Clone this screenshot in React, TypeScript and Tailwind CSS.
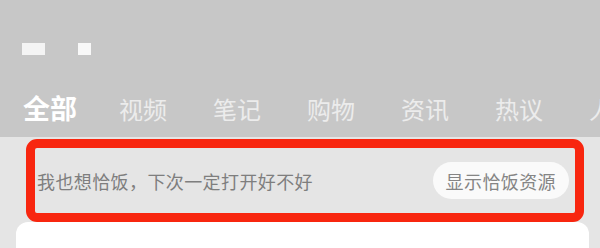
import React from "react";

export default function App() {
  const tabs = ["视频", "笔记", "购物", "资讯", "热议", "人文"];
  return (
    <div
      className="w-[600px] h-[248px] overflow-hidden bg-[#e5e5e5]"
      style={{ fontFamily: '"Noto Sans CJK SC", "Noto Sans", sans-serif' }}
    >
      <div className="h-[137px] bg-[#c7c7c7] overflow-hidden">
        <div className="flex pt-[43px] pl-[22px] gap-[33px]">
          <div className="w-[23px] h-[12px] bg-[#f4f4f4]" />
          <div className="w-[13px] h-[12px] bg-[#f8f8f8]" />
        </div>
        <div className="flex items-end mt-[39px] pl-[23px] whitespace-nowrap">
          <span className="text-[27px] leading-[28px] font-bold text-white">全部</span>
          <div className="flex gap-[46px] ml-[42px]">
            {tabs.map((t) => (
              <span key={t} className="text-[24px] leading-[26px] text-[#ececec] shrink-0">
                {t}
              </span>
            ))}
          </div>
        </div>
      </div>
      <div className="ml-[26px] mt-[2px] w-[558px] h-[83px] border-[9px] border-[#f8260f] rounded-[11px] flex items-center justify-between pl-[2px] pr-[6px]">
        <span className="text-[18px] tracking-[0.4px] text-[#7e7e7e] leading-none">
          我也想恰饭，下次一定打开好不好
        </span>
        <span className="h-[37px] px-[13px] rounded-full bg-[#fafafa] text-[18px] tracking-[0.4px] text-[#858585] flex items-center leading-none">
          显示恰饭资源
        </span>
      </div>
      <div className="ml-[16px] w-[573px] h-[40px] bg-white rounded-t-[12px]" />
    </div>
  );
}
